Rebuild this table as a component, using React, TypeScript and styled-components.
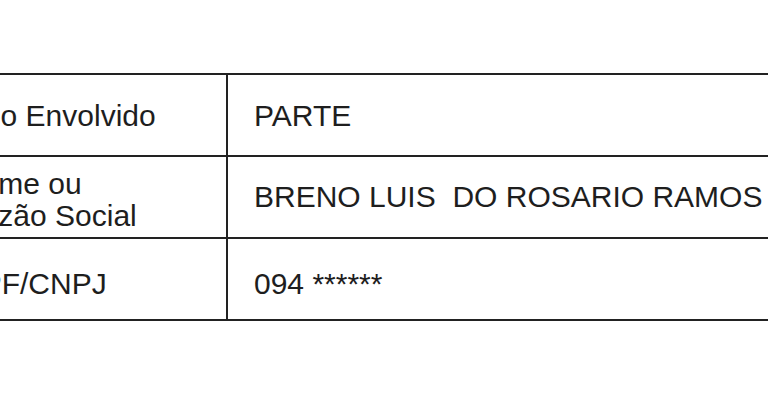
import React from "react";
import styled, { createGlobalStyle } from "styled-components";

const Global = createGlobalStyle`
  html, body { margin: 0; padding: 0; background: #ffffff; }
  body { font-family: "Liberation Sans", Arial, sans-serif; }
`;

const Page = styled.div`
  width: 768px;
  height: 413px;
  overflow: hidden;
  background: #ffffff;
  padding-top: 73px;
  box-sizing: border-box;
`;

const Table = styled.table`
  border-collapse: collapse;
  margin-left: -68px;
  width: 1000px;
  table-layout: fixed;
  font-family: "Liberation Sans", Arial, sans-serif;
  font-size: 30px;
  color: #1e1e1e;
`;

const Row = styled.tr`
  height: 82px;
`;

const Cell = styled.td<{ $drop: number }>`
  border: 2px solid #222222;
  padding: ${(p) => p.$drop * 2}px 0 0 26px;
  vertical-align: middle;
  line-height: 32px;
  white-space: pre;
`;

const rows: { label: string; value: string; labelDrop: number; valueDrop: number }[] = [
  { label: "Tipo Envolvido", value: "PARTE", labelDrop: 1, valueDrop: 1 },
  { label: "Nome ou\nRazão Social", value: "BRENO LUIS  DO ROSARIO RAMOS", labelDrop: 3, valueDrop: 0 },
  { label: "CPF/CNPJ", value: "094 ******", labelDrop: 5, valueDrop: 5 },
];

export default function App() {
  return (
    <>
      <Global />
      <Page>
        <Table>
          <colgroup>
            <col style={{ width: 294 }} />
            <col />
          </colgroup>
          <tbody>
            {rows.map((r) => (
              <Row key={r.label}>
                <Cell $drop={r.labelDrop}>{r.label}</Cell>
                <Cell $drop={r.valueDrop}>{r.value}</Cell>
              </Row>
            ))}
          </tbody>
        </Table>
      </Page>
    </>
  );
}
